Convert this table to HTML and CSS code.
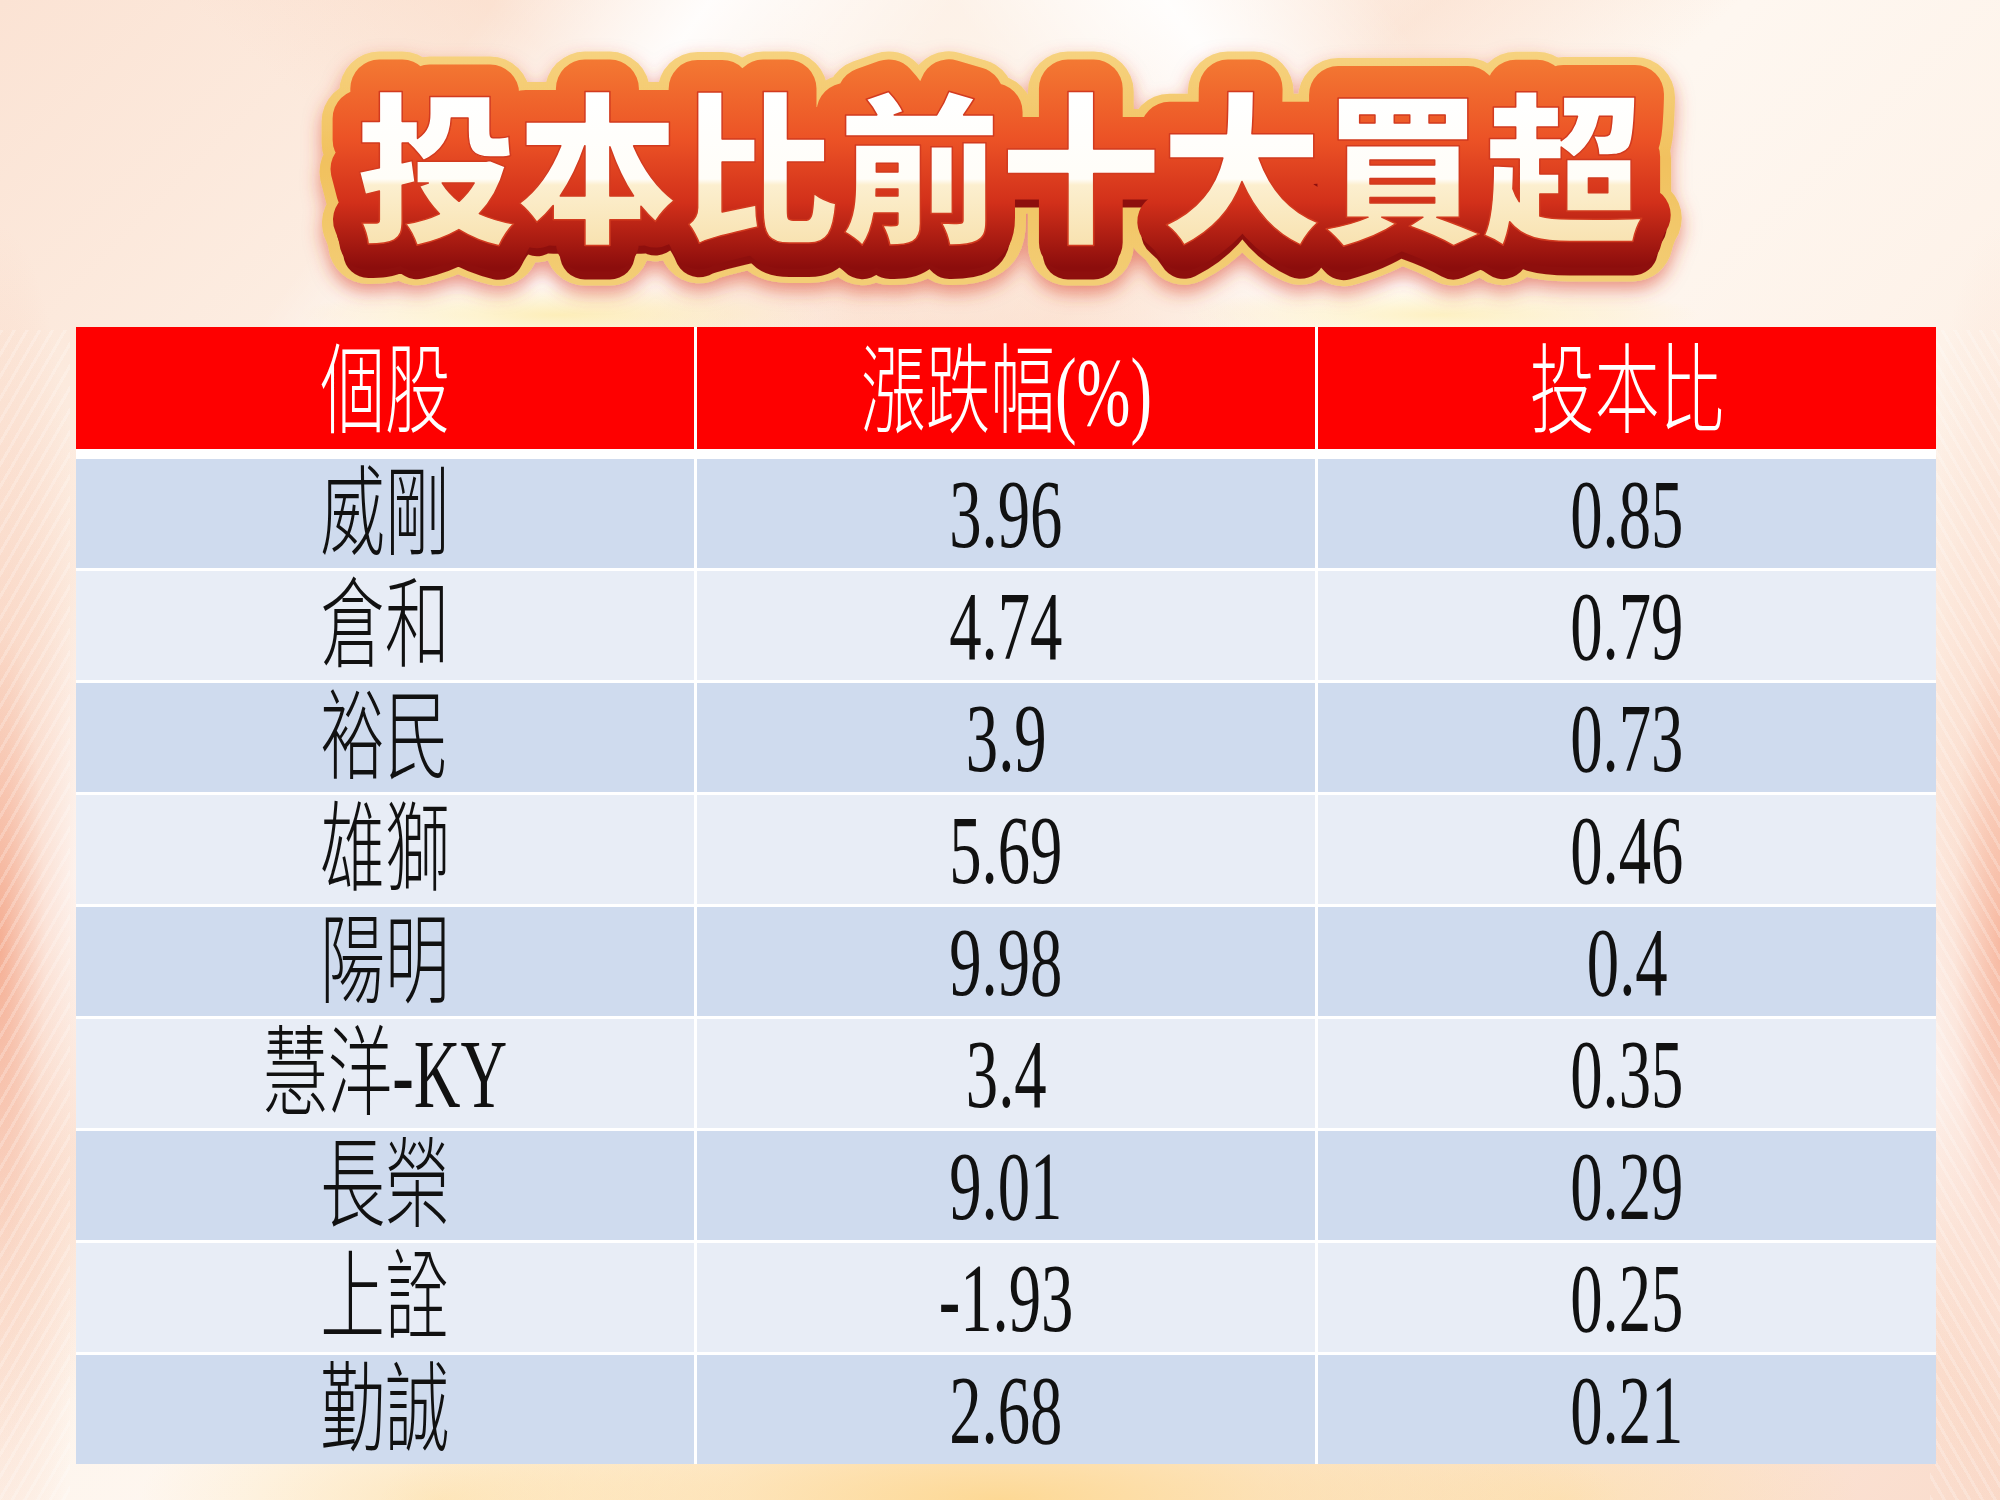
FILE: index.html
```html
<!DOCTYPE html>
<html lang="zh-Hant">
<head>
<meta charset="utf-8">
<title>投本比前十大買超</title>
<link rel="stylesheet" href="styles.css">
</head>
<body>
<div class="page">
  <header class="title">
    <svg class="title-art" viewBox="0 0 1400 300" width="1400" height="300">
      <defs>
        <linearGradient id="gStroke" gradientUnits="userSpaceOnUse" x1="0" y1="55" x2="0" y2="270">
          <stop offset="0" stop-color="#f47c34"/>
          <stop offset="0.4" stop-color="#ec5326"/>
          <stop offset="0.7" stop-color="#d2301a"/>
          <stop offset="1" stop-color="#8c0d0c"/>
        </linearGradient>
        <linearGradient id="gFill" gradientUnits="userSpaceOnUse" x1="0" y1="95" x2="0" y2="245">
          <stop offset="0" stop-color="#ffffff"/>
          <stop offset="0.56" stop-color="#fffdf8"/>
          <stop offset="0.6" stop-color="#fcefcf"/>
          <stop offset="1" stop-color="#f8e2b0"/>
        </linearGradient>
        <linearGradient id="gRim" gradientUnits="userSpaceOnUse" x1="0" y1="40" x2="0" y2="280">
          <stop offset="0" stop-color="#f7d482"/>
          <stop offset="0.5" stop-color="#f1c15e"/>
          <stop offset="1" stop-color="#f3cd74"/>
        </linearGradient>
        <filter id="glow" x="-10%" y="-20%" width="120%" height="150%">
          <feDropShadow dx="0" dy="8" stdDeviation="9" flood-color="#d8402a" flood-opacity="0.55"/>
        </filter>
      </defs>
      <use href="#titleText" class="layer-rim" x="0" y="0"/>
      <use href="#titleText" class="layer-ext" x="0" y="9"/>
      <use href="#titleText" class="layer-stroke" x="0" y="-3"/>
      <g class="layer-fill">
        <text id="titleText" class="tt" x="700" y="230">投本比前十大買超</text>
      </g>
    </svg>
  </header>

  <div class="table">
    <div class="row head">
      <div class="cell"><span>個股</span></div>
      <div class="cell"><span>漲跌幅(%)</span></div>
      <div class="cell"><span>投本比</span></div>
    </div>
    <div class="row">
      <div class="cell"><span>威剛</span></div>
      <div class="cell"><span>3.96</span></div>
      <div class="cell"><span>0.85</span></div>
    </div>
    <div class="row">
      <div class="cell"><span>倉和</span></div>
      <div class="cell"><span>4.74</span></div>
      <div class="cell"><span>0.79</span></div>
    </div>
    <div class="row">
      <div class="cell"><span>裕民</span></div>
      <div class="cell"><span>3.9</span></div>
      <div class="cell"><span>0.73</span></div>
    </div>
    <div class="row">
      <div class="cell"><span>雄獅</span></div>
      <div class="cell"><span>5.69</span></div>
      <div class="cell"><span>0.46</span></div>
    </div>
    <div class="row">
      <div class="cell"><span>陽明</span></div>
      <div class="cell"><span>9.98</span></div>
      <div class="cell"><span>0.4</span></div>
    </div>
    <div class="row">
      <div class="cell"><span>慧洋-KY</span></div>
      <div class="cell"><span>3.4</span></div>
      <div class="cell"><span>0.35</span></div>
    </div>
    <div class="row">
      <div class="cell"><span>長榮</span></div>
      <div class="cell"><span>9.01</span></div>
      <div class="cell"><span>0.29</span></div>
    </div>
    <div class="row">
      <div class="cell"><span>上詮</span></div>
      <div class="cell"><span>-1.93</span></div>
      <div class="cell"><span>0.25</span></div>
    </div>
    <div class="row">
      <div class="cell"><span>勤誠</span></div>
      <div class="cell"><span>2.68</span></div>
      <div class="cell"><span>0.21</span></div>
    </div>
  </div>
</div>
</body>
</html>
```
FILE: styles.css
```css
* { box-sizing: border-box; }

html, body {
  margin: 0;
  padding: 0;
}

body {
  width: 2000px;
  height: 1500px;
  overflow: hidden;
  font-family: "Liberation Serif", "Noto Sans CJK TC", serif;
}

.page {
  width: 2000px;
  height: 1500px;
  display: flex;
  flex-direction: column;
  background:
    radial-gradient(ellipse 620px 130px at 50% 100%, rgba(253, 214, 140, 0.9), rgba(253, 214, 140, 0)),
    radial-gradient(ellipse 300px 110px at 22% 100%, rgba(253, 222, 160, 0.6), rgba(253, 222, 160, 0)),
    radial-gradient(ellipse 300px 110px at 78% 100%, rgba(253, 222, 160, 0.6), rgba(253, 222, 160, 0)),
    repeating-linear-gradient(120deg, rgba(255, 255, 255, 0.22) 0 3px, rgba(255, 255, 255, 0) 3px 11px) 0 330px / 70px 1170px no-repeat,
    repeating-linear-gradient(60deg, rgba(255, 255, 255, 0.22) 0 3px, rgba(255, 255, 255, 0) 3px 11px) 100% 330px / 70px 1170px no-repeat,
    radial-gradient(ellipse 100px 720px at 0 63%, rgba(242, 155, 122, 0.8), rgba(247, 195, 172, 0.45) 45%, rgba(250, 220, 205, 0) 100%),
    radial-gradient(ellipse 100px 720px at 100% 63%, rgba(245, 168, 140, 0.75), rgba(249, 205, 186, 0.4) 45%, rgba(250, 220, 205, 0) 100%),
    radial-gradient(ellipse 260px 30px at 28% 315px, rgba(253, 234, 165, 0.75), rgba(253, 234, 165, 0)),
    radial-gradient(ellipse 260px 30px at 72% 315px, rgba(253, 234, 165, 0.65), rgba(253, 234, 165, 0)),
    linear-gradient(126deg, rgba(255, 255, 255, 0) 16%, rgba(255, 255, 255, 0.9) 23%, rgba(255, 255, 255, 0) 31%),
    linear-gradient(54deg, rgba(255, 255, 255, 0) 66%, rgba(255, 255, 255, 0.9) 73%, rgba(255, 255, 255, 0) 80%),
    linear-gradient(140deg, rgba(250, 215, 195, 0) 30%, rgba(250, 212, 190, 0.45) 38%, rgba(250, 215, 195, 0) 46%),
    linear-gradient(40deg, rgba(250, 215, 195, 0) 52%, rgba(250, 212, 190, 0.4) 60%, rgba(250, 215, 195, 0) 68%),
    linear-gradient(135deg, #fbe3d4 0%, #fdf1e7 25%, #fef7f0 50%, #fdefe4 75%, #fadccc 100%);
}

/* ---------- title ---------- */
.title {
  height: 327px;
  display: flex;
  justify-content: center;
  align-items: flex-start;
}

.title-art {
  display: block;
  width: 1400px;
  height: 300px;
  overflow: visible;
}

.tt {
  font-family: "Noto Sans CJK TC", "Noto Sans CJK SC", sans-serif;
  font-weight: 900;
  font-size: 161px;
  text-anchor: middle;
  stroke-linejoin: round;
  stroke-linecap: round;
}

.layer-rim {
  fill: url(#gRim);
  stroke: url(#gRim);
  stroke-width: 80px;
  filter: url(#glow);
}

.layer-ext {
  fill: #8e0f0d;
  stroke: #8e0f0d;
  stroke-width: 50px;
}

.layer-stroke {
  fill: url(#gStroke);
  stroke: url(#gStroke);
  stroke-width: 58px;
}

.layer-fill {
  fill: url(#gFill);
  stroke: #d23a1f;
  stroke-width: 1.5px;
}

/* ---------- table ---------- */
.table {
  width: 1860px;
  margin-left: 76px;
  display: flex;
  flex-direction: column;
  gap: 3px;
  background: #ffffff;
}

.row {
  display: grid;
  grid-template-columns: 1fr 1fr 1fr;
  column-gap: 3px;
  background: #ffffff;
}

.row.head {
  margin-bottom: 7px;
}

.cell {
  height: 109px;
  display: flex;
  align-items: center;
  justify-content: center;
  color: #111111;
  overflow: hidden;
}

.row:nth-child(odd) .cell {
  background: #e8edf6;
}

.row:nth-child(even) .cell {
  background: #cfdbee;
}

.row.head .cell {
  height: 122px;
  background: #fe0000;
  color: #ffffff;
  padding-top: 8px;
}

.cell span {
  display: inline-block;
  font-size: 98px;
  font-weight: 300;
  line-height: 1;
  white-space: nowrap;
  transform: scaleX(0.66);
}
```
